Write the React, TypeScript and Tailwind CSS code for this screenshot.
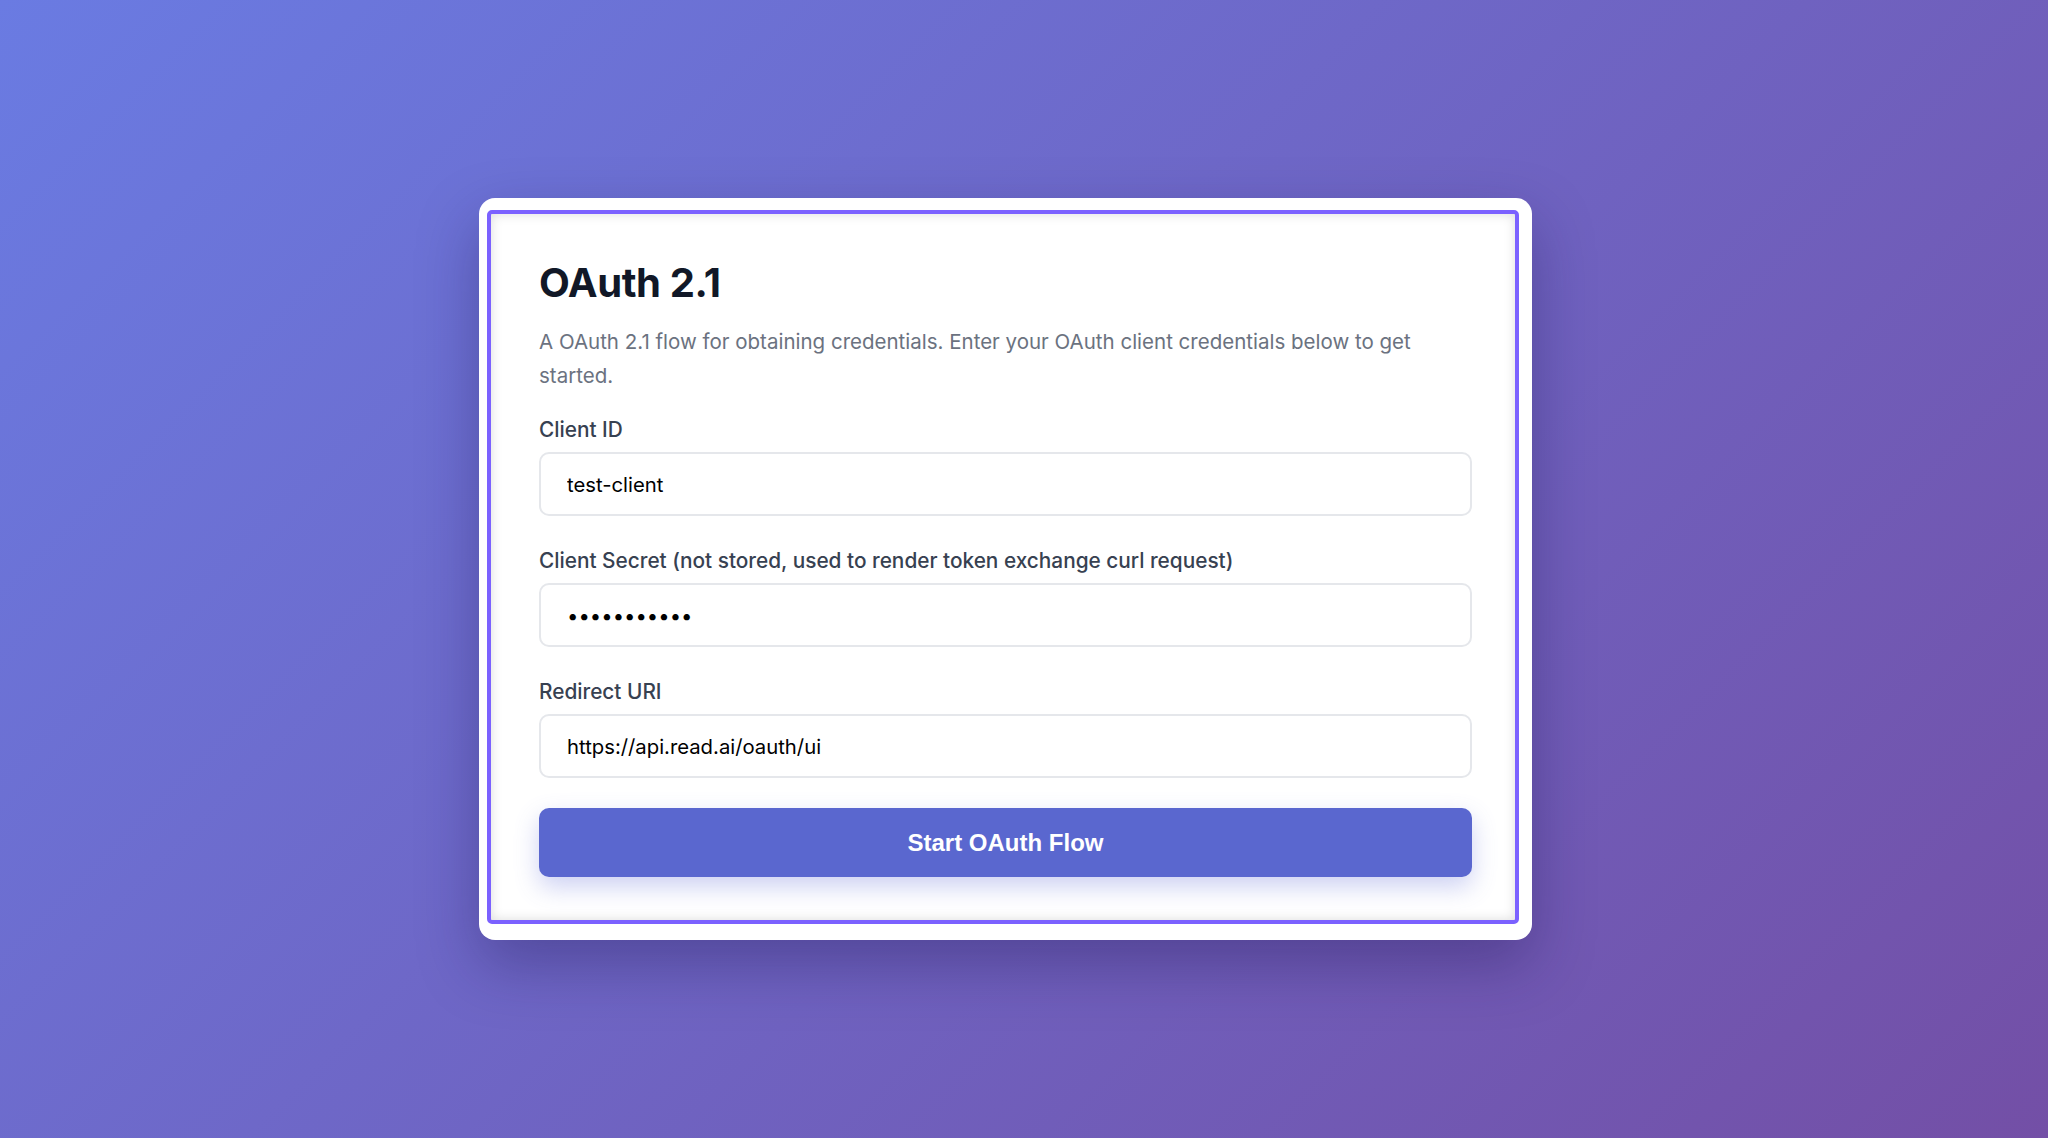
import React from "react";

function Field({
  label,
  value,
  type = "text",
  className = "",
}: {
  label: string;
  value: string;
  type?: string;
  className?: string;
}) {
  return (
    <div className={className}>
      <label className="block text-[20.8px] leading-[28px] font-medium text-[#374151] mb-[8px]">
        {label}
      </label>
      <input
        type={type}
        readOnly
        value={value}
        className="block w-full h-[64px] px-[26px] rounded-[10px] border-2 border-[#e5e7eb] bg-white text-[20.3px] text-black outline-none"
        style={{ fontFamily: "Inter, 'Noto Sans', sans-serif" }}
      />
    </div>
  );
}

export default function App() {
  return (
    <div
      className="min-h-screen w-full flex items-center justify-center pr-[37px] bg-[linear-gradient(135deg,#6a7be2_0%,#734fa6_100%)]"
      style={{ fontFamily: "Inter, 'Noto Sans', sans-serif" }}
    >
      <div className="relative w-[1053px] bg-white rounded-[16px] pt-[61px] px-[60px] pb-[63px] shadow-[0_25px_60px_rgba(30,20,80,0.35)]">
        {/* highlight frame drawn over the card */}
        <div className="pointer-events-none absolute left-[8px] top-[12px] right-[13px] bottom-[16px] rounded-[5px] border-[4px] border-[#7b61ff] shadow-[inset_0_0_12px_rgba(0,0,0,0.14)]" />

        <h1 className="text-[40px] leading-[48px] font-bold text-[#111827] tracking-[-0.4px]">
          OAuth 2.1
        </h1>
        <p className="mt-[18px] text-[20.5px] leading-[34px] text-[#6b7280]">
          A OAuth 2.1 flow for obtaining credentials. Enter your OAuth client
          credentials below to get started.
        </p>

        <Field className="mt-[23px]" label="Client ID" value="test-client" />
        <Field
          className="mt-[31px]"
          label="Client Secret (not stored, used to render token exchange curl request)"
          value="test-secret"
          type="password"
        />
        <Field
          className="mt-[31px]"
          label="Redirect URI"
          value="https://api.read.ai/oauth/ui"
        />

        <button
          type="button"
          className="mt-[30px] w-full h-[69px] rounded-[10px] bg-[#5a67cf] text-white text-[24px] font-bold shadow-[0_10px_24px_rgba(90,103,216,0.3)]"
          style={{ fontFamily: "'Liberation Sans', Arial, sans-serif" }}
        >
          Start OAuth Flow
        </button>
      </div>
    </div>
  );
}
